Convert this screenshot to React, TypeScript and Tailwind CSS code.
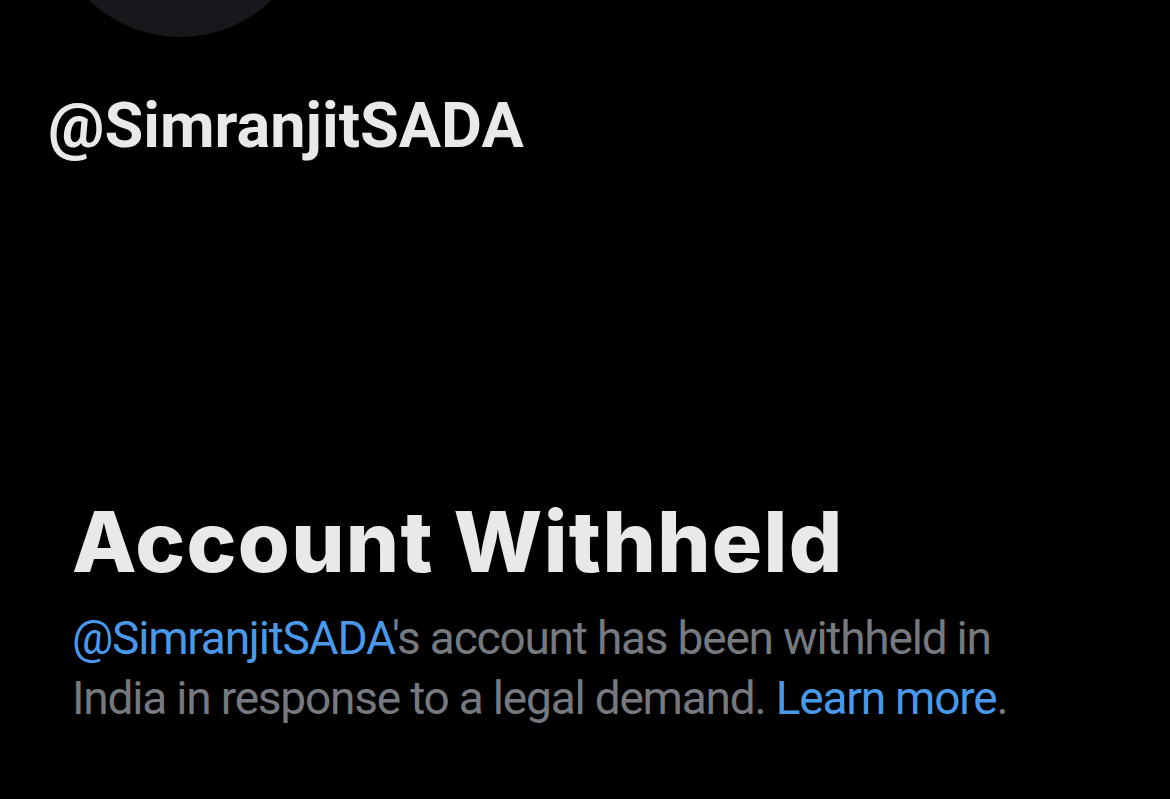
const App = () => {
  return (
    <div className="w-[1170px] h-[799px] bg-black overflow-hidden flex flex-col">
      <div className="ml-[49px] -mt-[226px] w-[263px] h-[263px] shrink-0 rounded-full bg-[#17181c]" />

      <h2 className="ml-[48px] mt-[57px] text-[63px] leading-[63px] font-bold text-[#e7e9ea] font-['Roboto',sans-serif]">
        @SimranjitSADA
      </h2>

      <section className="ml-[72px] mt-[343px] w-[960px]">
        <h1 className="text-[84px] leading-[84px] font-extrabold tracking-[1.3px] text-[#e7e9ea] font-['Inter',sans-serif]">
          Account Withheld
        </h1>
        <p className="mt-[24px] text-[46px] leading-[60px] tracking-[-1.2px] text-[#76797e] font-['Roboto',sans-serif]">
          <a href="#" className="text-[#4a99e8]">@SimranjitSADA</a>'s account has been withheld in India in
          response to a legal demand. <a href="#" className="text-[#4a99e8]">Learn more</a>.
        </p>
      </section>
    </div>
  );
};

export default App;
